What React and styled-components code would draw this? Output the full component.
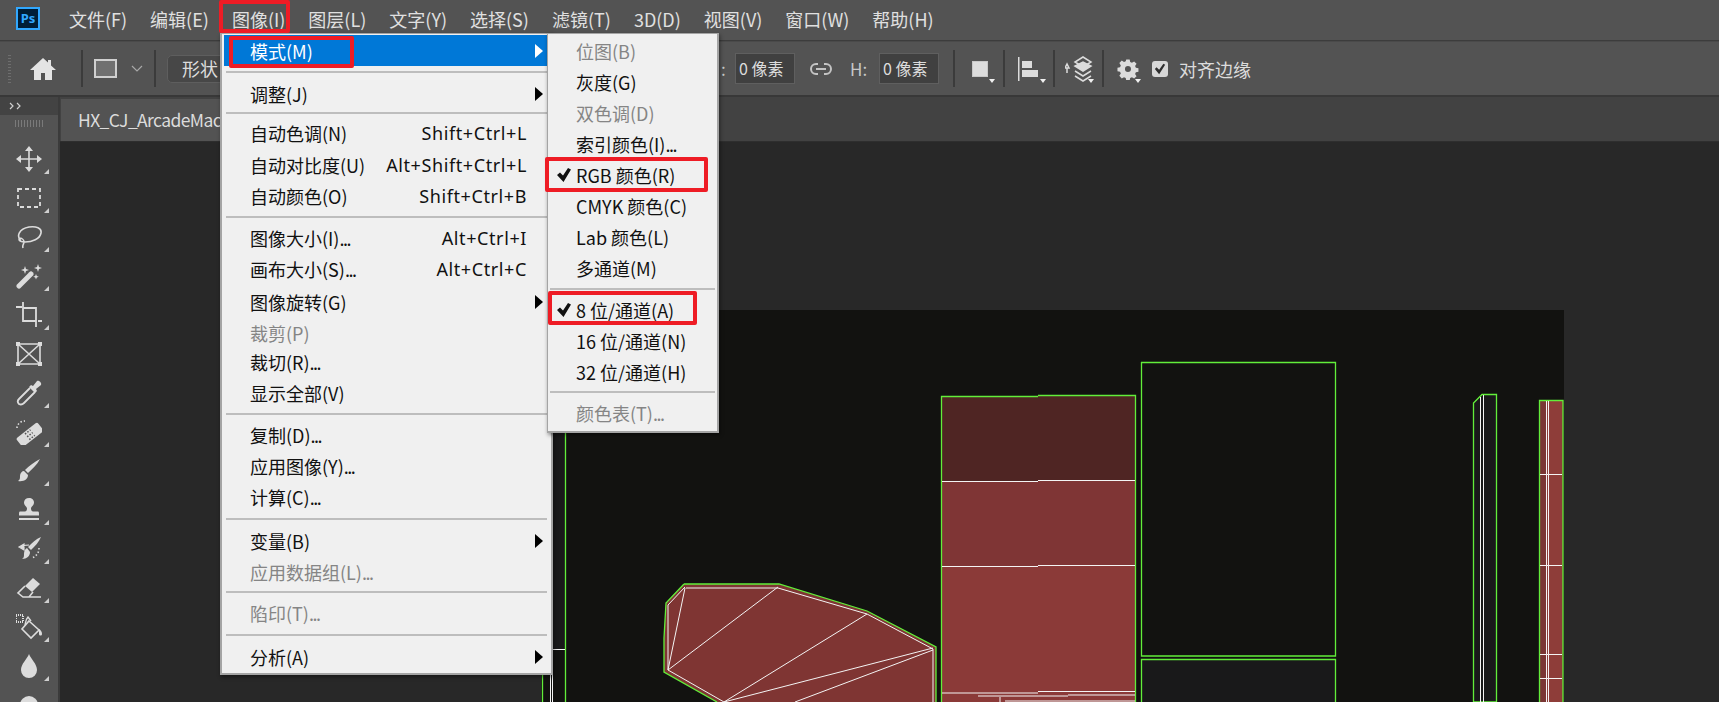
import React from 'react';
import styled, { createGlobalStyle } from 'styled-components';

const FONT = '"Noto Sans CJK SC", "Noto Sans", sans-serif';
const GREEN = '#62ee3a';
const WHITE = '#f4f4f4';

const GlobalStyle = createGlobalStyle`
    html, body {
        margin: 0;
        padding: 0;
        background: #282828;
        overflow: hidden;
    }
`;

const menuTitles = ['文件(F)', '编辑(E)', '图像(I)', '图层(L)', '文字(Y)', '选择(S)', '滤镜(T)', '3D(D)', '视图(V)', '窗口(W)', '帮助(H)'];

const mainMenu = [
    { label: '模式(M)', arrow: true, active: true },
    { sep: 12 },
    { label: '调整(J)', arrow: true },
    { sep: 8 },
    { label: '自动色调(N)', key: 'Shift+Ctrl+L', h: 32 },
    { label: '自动对比度(U)', key: 'Alt+Shift+Ctrl+L' },
    { label: '自动颜色(O)', key: 'Shift+Ctrl+B', h: 32 },
    { sep: 10 },
    { label: '图像大小(I)', dots: true, key: 'Alt+Ctrl+I', h: 31 },
    { label: '画布大小(S)', dots: true, key: 'Alt+Ctrl+C', h: 32 },
    { label: '图像旋转(G)', arrow: true, h: 34 },
    { label: '裁剪(P)', disabled: true, h: 27 },
    { label: '裁切(R)', dots: true },
    { label: '显示全部(V)' },
    { sep: 11 },
    { label: '复制(D)', dots: true },
    { label: '应用图像(Y)', dots: true },
    { label: '计算(C)', dots: true },
    { sep: 13 },
    { label: '变量(B)', arrow: true },
    { label: '应用数据组(L)', dots: true, disabled: true },
    { sep: 10 },
    { label: '陷印(T)', dots: true, disabled: true },
    { sep: 13 },
    { label: '分析(A)', arrow: true },
];

const subMenu = [
    { label: '位图(B)', disabled: true },
    { label: '灰度(G)' },
    { label: '双色调(D)', disabled: true },
    { label: '索引颜色(I)', dots: true },
    { label: 'RGB 颜色(R)', checked: true },
    { label: 'CMYK 颜色(C)' },
    { label: 'Lab 颜色(L)' },
    { label: '多通道(M)' },
    { sep: 11 },
    { label: '8 位/通道(A)', checked: true },
    { label: '16 位/通道(N)' },
    { label: '32 位/通道(H)' },
    { sep: 10 },
    { label: '颜色表(T)', dots: true, disabled: true },
];

const Icon = ({ size = 26, children }) => (
    <svg width={size} height={size} viewBox='0 0 26 26' fill='none' stroke='#dcdcdc' strokeWidth='1.6'>{children}</svg>
);

const toolIcons = [
    <Icon key='move'>
        <path d='M13 3v20M3 13h20' />
        <path d='M13 0l4 5H9zM13 26l4-5H9zM0 13l5-4v8zM26 13l-5-4v8z' fill='#dcdcdc' stroke='none' />
    </Icon>,
    <Icon key='marquee'>
        <rect x='2' y='4' width='22' height='18' strokeDasharray='4 3' strokeWidth='1.8' />
    </Icon>,
    <Icon key='lasso'>
        <path d='M5 17C0 12 3 5 13 3c7-1 13 1 12 6-1 6-9 9-16 9-3 0-6-1-6-3M3 14c3 0 5 2 5 4 0 2-2 3-1 6' />
    </Icon>,
    <Icon key='wand'>
        <path d='M3 23L15 11' strokeWidth='5' strokeLinecap='round' />
        <path d='M9 3l1 3 3 1-3 1-1 3-1-3-3-1 3-1zM22 1l1 3 3 1-3 1-1 3-1-3-3-1 3-1zM20 11l.8 2 2 .8-2 .8-.8 2-.8-2-2-.8 2-.8z' fill='#dcdcdc' stroke='none' />
    </Icon>,
    <Icon key='crop'>
        <path d='M0 5h6M7 0v19h13M7 6h13v19M22 19h4' strokeWidth='1.8' />
    </Icon>,
    <Icon key='frame'>
        <path d='M2 3h22v20H2zM2 3l22 20M24 3L2 23' />
        <path d='M0 1h4v4H0zM22 1h4v4h-4zM0 21h4v4H0zM22 21h4v4h-4z' fill='#dcdcdc' stroke='none' />
    </Icon>,
    <Icon key='eyedropper'>
        <path d='M14 8L3 19c-2 2-1 4 0 5 2 1 3 1 5-1l11-11' strokeWidth='1.8' />
        <path d='M13 7l2-2 2 1 4-5c2-1 5 2 4 4l-5 4 1 2-2 2z' fill='#dcdcdc' stroke='none' />
    </Icon>,
    <Icon key='healing'>
        <g transform='rotate(-38 14 15)'>
            <rect x='0' y='10' width='27' height='11' rx='2' fill='#dcdcdc' stroke='none' />
            <path d='M10 12h7M10 15.500h7M10 19h7' stroke='#535353' strokeDasharray='1.500 1.500' strokeWidth='1.500' />
        </g>
        <path d='M1 9c0-4 4-7 8-7' strokeDasharray='1.500 2' />
    </Icon>,
    <Icon key='brush'>
        <path d='M24 1c-3 6-8 10-12 14l-3-3C13 8 18 4 24 1zM8 13l4 4c0 4-4 7-10 6 2-1 2-3 2-5 0-3 2-5 4-5z' fill='#dcdcdc' stroke='none' />
    </Icon>,
    <Icon key='stamp'>
        <path d='M13 1c3 0 5 2 5 4.500 0 3-3 4-3 6 0 2 1 3 2 3h5c1 0 1 1 1 4H3c0-3 0-4 1-4h5c1 0 2-1 2-3 0-2-3-3-3-6C8 3 10 1 13 1z' fill='#dcdcdc' stroke='none' />
        <path d='M3 22h20' strokeWidth='2' />
    </Icon>,
    <Icon key='history'>
        <path d='M25 1c-2 5-6 9-10 13l-3-3c4-4 8-8 13-10zM11 12l3 4c0 4-3 7-8 7 2-1 2-3 2-5 0-3 1-5 3-6z' fill='#dcdcdc' stroke='none' />
        <path d='M3 11l5-3v6zM7 10c2-1 4-1 6-1' fill='#dcdcdc' strokeWidth='1.200' />
        <path d='M23 12c0 4-2 8-7 10' strokeDasharray='1.500 2' />
    </Icon>,
    <Icon key='eraser'>
        <path d='M17 3l7 6-8 8-7-6z' fill='#dcdcdc' stroke='none' />
        <path d='M9 11l-7 7 5 4h6l4-5M7 22h18' />
    </Icon>,
    <Icon key='bucket'>
        <path d='M13 7l10 9-8 8L6 15z' />
        <path d='M9 11c1-4 1-6 3-8l3 4' strokeWidth='1.400' />
        <path d='M23 15c2 1 3 3 3 5s-3 2-3 0 0-3 0-5z' fill='#dcdcdc' stroke='none' />
        <rect x='0' y='1' width='7' height='7' strokeDasharray='1 1' strokeWidth='2' />
    </Icon>,
    <Icon key='drop'>
        <path d='M13 1c2 5 8 10 8 16a8 8 0 0 1-16 0c0-6 6-11 8-16z' fill='#dcdcdc' stroke='none' />
    </Icon>,
    <Icon key='dodge'>
        <circle cx='13' cy='13' r='9' fill='#dcdcdc' stroke='none' />
    </Icon>,
];

const Doc = () => (
    <DocSvg viewBox='541 310 1023 392' width='1023' height='392'>
        {/* left piece, mostly under the menu */}
        <rect x='553' y='432' width='12' height='217' fill='#19191a' />
        <path d='M542.500 673V702M565.500 432V702' stroke={GREEN} strokeWidth='1.300' />
        <path d='M550.500 673V702M552.500 673V702M552 649.500H565' stroke={WHITE} strokeWidth='1' />

        {/* the fan shaped piece */}
        <path d='M684 584L779 584L867 611L936 647V702H717L664 672V638L666 603Z' fill='#7f3533' stroke='none' />
        <path d='M684 584L779 584L867 611L936 647V702M717 702L664 672V638L666 603L684 584' fill='none' stroke={GREEN} strokeWidth='1.300' />
        <path d='M686 588H778L867 614L933 649V702M668 670L668 605L685 587M668 670L685 588M668 670L778 587M668 670L724 702M724 702L867 614M724 702L933 648M795 702L933 650' fill='none' stroke={WHITE} strokeWidth='1' />

        {/* tall block */}
        <rect x='941' y='396' width='195' height='85' fill='#4f2523' />
        <rect x='941' y='481' width='195' height='85' fill='#7f3535' />
        <rect x='941' y='566' width='195' height='136' fill='#8b3a38' />
        <path d='M941.500 702V396.500H1038M1038 395.500H1135.500V702' fill='none' stroke={GREEN} strokeWidth='1.300' />
        <path d='M942 481.500H1038M1038 480.500H1135M942 566.500H1038M1038 565.500H1135' fill='none' stroke={WHITE} strokeWidth='1' />
        <path d='M942 693H1038M1038 691.500H1135M978 696H1068M1068 695H1135M1005 701H1135M1000 697V702' fill='none' stroke={WHITE} strokeWidth='1' />

        {/* empty blocks */}
        <path d='M1141 362.500H1335.500V656H1141.500V362' fill='none' stroke={GREEN} strokeWidth='1.300' />
        <rect x='1141' y='659' width='195' height='43' fill='#19191a' />
        <path d='M1141.500 702V659.500H1335.500V702' fill='none' stroke={GREEN} strokeWidth='1.300' />

        {/* thin strip */}
        <path d='M1473.500 702V403L1482 394.500H1496.500V702Z' fill='#19191a' stroke={GREEN} strokeWidth='1.300' />
        <path d='M1480.500 397V702M1483.500 395V702' stroke={WHITE} strokeWidth='1' />

        {/* right strip */}
        <rect x='1539' y='400' width='7' height='302' fill='#7a3634' />
        <rect x='1546' y='400' width='17' height='302' fill='#8e3d39' />
        <path d='M1539.500 702V400.500H1563V702' fill='none' stroke={GREEN} strokeWidth='1.300' />
        <path d='M1546.500 401V702M1548.500 401V702M1540 474.500H1562M1540 565.500H1562M1540 654.500H1562M1540 678.500H1562' stroke={WHITE} strokeWidth='1' />
    </DocSvg>
);

const MenuItems = ({ items }) => items.map((item, idx) => {
    if (item.sep) return <Separator key={idx} $h={item.sep} />;
    return (
        <Row key={idx} $h={item.h} $active={item.active} $disabled={item.disabled}>
            {item.checked && <Check viewBox='0 0 14 14'><path d='M0 7l3-2.500 3 3L11 0l3 1.500L6.500 14z' /></Check>}
            <span>{item.label}{item.dots && <Dots>...</Dots>}</span>
            {item.key && <Shortcut>{item.key}</Shortcut>}
            {item.arrow && <Arrow $active={item.active} />}
        </Row>
    );
});

const App = () => {
    return (
        <Page>
            <GlobalStyle />
            <MenuBar>
                <PsLogo>Ps</PsLogo>
                <MenuTitles>
                    {menuTitles.map((t, idx) => <MenuTitle key={idx}>{t}</MenuTitle>)}
                </MenuTitles>
            </MenuBar>

            <OptionsBar>
                <Gripper />
                <HomeIcon viewBox='0 0 26 24'><path d='M13 1L0 13h4v10h7v-7h4v7h7V13h4l-5-4.600V3h-3v2.600z' /></HomeIcon>
                <ToolSep $ml={25} />
                <ShapeSwatch />
                <Chevron viewBox='0 0 12 8'><path d='M1 1l5 5 5-5' /></Chevron>
                <ToolSep $ml={11} />
                <ModePill>形状</ModePill>
                <Colon>:</Colon>
                <SizeInput>0 像素</SizeInput>
                <LinkIcon viewBox='0 0 24 14'>
                    <path d='M9 2H7a5 5 0 0 0 0 10h2M15 2h2a5 5 0 0 1 0 10h-2M7 7h10' />
                </LinkIcon>
                <OptionLabel>H:</OptionLabel>
                <SizeInput $ml={11}>0 像素</SizeInput>
                <ToolSep $ml={14} />
                <DropButton $ml={17} $w={23}>
                    <FillSwatch />
                </DropButton>
                <ToolSep $ml={8} />
                <DropButton $ml={12} $w={29}>
                    <svg width='22' height='26' viewBox='0 0 22 26' fill='#dcdcdc'>
                        <path d='M1 1h1.500v24H1zM5 5h10v7H5zM5 14h16v7H5z' />
                    </svg>
                </DropButton>
                <ToolSep $ml={7} />
                <DropButton $ml={10} $w={29}>
                    <svg width='28' height='26' viewBox='0 0 28 26' fill='none' stroke='#dcdcdc' strokeWidth='1.500'>
                        <path d='M0 12h4M2 8l-2 4h4zM2 12v5' />
                        <path d='M18 1l8 5-8 5-8-5z' />
                        <path d='M10 10l8 5 8-5-8-4z' fill='#dcdcdc' />
                        <path d='M10 15l8 5 8-5M10 20l8 5 8-5' />
                    </svg>
                </DropButton>
                <ToolSep $ml={8} />
                <DropButton $ml={13} $w={24}>
                    <svg width='22' height='22' viewBox='0 0 22 22' fill='#dcdcdc' fillRule='evenodd'>
                        <path d='M9 0h4l.6 3 2 .9 2.600-1.700 2.800 2.800-1.700 2.600.9 2 3 .6v4l-3 .6-.9 2 1.700 2.600-2.800 2.800-2.600-1.700-2 .9-.6 3H9l-.6-3-2-.9-2.600 1.700L1 18.800l1.700-2.600-.9-2-3-.6v-4l3-.6.9-2L1 4l2.800-2.800 2.600 1.700 2-.9zM11 7.500a3.500 3.500 0 1 0 0 7 3.500 3.500 0 0 0 0-7z' transform='translate(1.500 1.500) scale(.86)' />
                    </svg>
                </DropButton>
                <CheckBox>
                    <svg width='12' height='12' viewBox='0 0 14 14' fill='#2f2f2f'><path d='M1 7l2-2 3 3 5-7 2 1-7 11z' /></svg>
                </CheckBox>
                <CheckLabel>对齐边缘</CheckLabel>
            </OptionsBar>

            <Workspace>
                <Toolbar>
                    <CollapseStrip>
                        <svg width='14' height='8' viewBox='0 0 14 8' fill='none' stroke='#cfcfcf' strokeWidth='1.200'>
                            <path d='M1 1l3 3-3 3M8 1l3 3-3 3' />
                        </svg>
                    </CollapseStrip>
                    <ToolGrip />
                    <ToolList>
                        {toolIcons.map((icon, idx) => <Tool key={idx} $corner={idx !== 5}>{icon}</Tool>)}
                    </ToolList>
                </Toolbar>
                <Main>
                    <TabRow>
                        <DocTab>HX_CJ_ArcadeMachine</DocTab>
                    </TabRow>
                    <Canvas>
                        <Doc />
                    </Canvas>
                </Main>
            </Workspace>

            <Menu>
                <MenuItems items={mainMenu} />
            </Menu>
            <SubMenu>
                <MenuItems items={subMenu} />
            </SubMenu>

            <RedBox $x={219} $y={0} $w={71} $h={33} />
            <RedBox $x={229} $y={36} $w={125} $h={32} />
            <RedBox $x={545} $y={157} $w={163} $h={35} />
            <RedBox $x={548} $y={291} $w={149} $h={34} />
        </Page>
    );
};

const Page = styled.div`
    position: relative;
    width: 1719px;
    height: 702px;
    overflow: hidden;
    display: flex;
    flex-direction: column;
    background: #282828;
    font-family: ${FONT};
`;

const MenuBar = styled.div`
    box-sizing: border-box;
    height: 41px;
    flex: none;
    display: flex;
    align-items: center;
    padding-bottom: 3px;
    background: #535353;
    border-bottom: 1px solid #3c3c3c;
`;

const PsLogo = styled.div`
    box-sizing: border-box;
    width: 24px;
    height: 23px;
    margin-left: 16px;
    border: 2px solid #31a8ff;
    background: #001e36;
    color: #31a8ff;
    font: bold 13px/19px "Noto Sans", sans-serif;
    text-align: center;
`;

const MenuTitles = styled.div`
    display: flex;
    gap: 23px;
    margin-left: 29px;
`;

const MenuTitle = styled.div`
    color: #e0e0e0;
    font-size: 18px;
    line-height: 26px;
    white-space: nowrap;
`;

const OptionsBar = styled.div`
    height: 53px;
    flex: none;
    display: flex;
    align-items: center;
    padding-left: 8px;
    background: #535353;
    border-top: 1px solid #4a4a4a;
    border-bottom: 2px solid #383838;
`;

const Gripper = styled.div`
    width: 3px;
    height: 28px;
    background: repeating-linear-gradient(to bottom, #6e6e6e 0 1px, transparent 1px 3px);
`;

const HomeIcon = styled.svg`
    width: 26px;
    height: 24px;
    margin-left: 19px;
    fill: #e4e4e4;
`;

const ToolSep = styled.div`
    width: 2px;
    height: 37px;
    flex: none;
    margin-left: ${p => p.$ml}px;
    background: #3b3b3b;
`;

const ShapeSwatch = styled.div`
    box-sizing: border-box;
    width: 23px;
    height: 19px;
    margin-left: 11px;
    background: #707070;
    border: 2px solid #d0d0d0;
`;

const Chevron = styled.svg`
    width: 12px;
    height: 8px;
    margin-left: 14px;
    fill: none;
    stroke: #a8a8a8;
    stroke-width: 1.2;
`;

const ModePill = styled.div`
    box-sizing: border-box;
    width: 94px;
    height: 28px;
    margin-left: 11px;
    padding-left: 14px;
    background: #474747;
    border: 1px solid #5e5e5e;
    border-radius: 5px;
    color: #dcdcdc;
    font-size: 18px;
    line-height: 25px;
`;

const Colon = styled.div`
    width: 4px;
    margin-left: 460px;
    color: #c8c8c8;
    font-size: 17px;
`;

const SizeInput = styled.div`
    box-sizing: border-box;
    width: 60px;
    height: 31px;
    flex: none;
    margin-left: ${p => p.$ml || 10}px;
    padding-left: 3px;
    background: #404040;
    border: 1px solid #5f5f5f;
    color: #dcdcdc;
    font-size: 16px;
    line-height: 29px;
    white-space: nowrap;
`;

const LinkIcon = styled.svg`
    width: 24px;
    height: 14px;
    margin-left: 14px;
    fill: none;
    stroke: #c4c4c4;
    stroke-width: 2;
`;

const OptionLabel = styled.div`
    width: 18px;
    margin-left: 17px;
    color: #c8c8c8;
    font-size: 17px;
`;

const DropButton = styled.div`
    position: relative;
    width: ${p => p.$w}px;
    height: 30px;
    flex: none;
    display: flex;
    align-items: center;
    margin-left: ${p => p.$ml}px;
    &::after {
        content: '';
        position: absolute;
        right: 0;
        bottom: 1px;
        border-left: 3px solid transparent;
        border-right: 3px solid transparent;
        border-top: 4px solid #f0f0f0;
    }
`;

const FillSwatch = styled.div`
    width: 16px;
    height: 16px;
    background: #dcdcdc;
    border: 1px solid #c8c8c8;
    box-sizing: border-box;
`;

const CheckBox = styled.div`
    width: 16px;
    height: 16px;
    flex: none;
    display: flex;
    align-items: center;
    justify-content: center;
    margin-left: 11px;
    background: #d8d8d8;
    border-radius: 3px;
`;

const CheckLabel = styled.div`
    margin-left: 11px;
    color: #dcdcdc;
    font-size: 18px;
`;

const Workspace = styled.div`
    flex: 1;
    min-height: 0;
    display: flex;
`;

const Toolbar = styled.div`
    width: 58px;
    flex: none;
    background: #535353;
    border-right: 2px solid #3b3b3b;
`;

const CollapseStrip = styled.div`
    height: 18px;
    display: flex;
    align-items: center;
    padding-left: 9px;
    background: #434343;
`;

const ToolGrip = styled.div`
    width: 28px;
    height: 7px;
    margin: 5px 0 0 15px;
    background: repeating-linear-gradient(to right, #7a7a7a 0 1px, transparent 1px 3px);
`;

const ToolList = styled.div`
    display: flex;
    flex-direction: column;
    padding-top: 12px;
`;

const Tool = styled.div`
    position: relative;
    height: 39px;
    flex: none;
    display: flex;
    align-items: center;
    justify-content: center;
    &::after {
        content: '';
        display: ${p => (p.$corner ? 'block' : 'none')};
        position: absolute;
        right: 9px;
        bottom: 4px;
        border-left: 5px solid transparent;
        border-bottom: 5px solid #cfcfcf;
    }
`;

const Main = styled.div`
    flex: 1;
    min-width: 0;
    display: flex;
    flex-direction: column;
`;

const TabRow = styled.div`
    height: 44px;
    flex: none;
    display: flex;
    align-items: flex-end;
    background: #424242;
    border-bottom: 1px solid #2e2e2e;
`;

const DocTab = styled.div`
    box-sizing: border-box;
    height: 42px;
    margin-left: 1px;
    padding: 0 60px 0 17px;
    background: #535353;
    color: #dcdcdc;
    font-size: 17.5px;
    letter-spacing: -0.6px;
    line-height: 42px;
`;

const Canvas = styled.div`
    flex: 1;
    min-height: 0;
    overflow: hidden;
    padding: 168px 0 0 481px;
    background: #282828;
`;

const DocSvg = styled.svg`
    display: block;
    background: #121210;
`;

const Menu = styled.div`
    position: absolute;
    left: 220px;
    top: 33px;
    box-sizing: border-box;
    width: 333px;
    height: 642px;
    padding: 1px 2px;
    background: #f0f0f0;
    border: 2px solid #a4a4a4;
    border-top-width: 1px;
    box-shadow: 1px 2px 4px rgba(0, 0, 0, 0.45);
`;

const SubMenu = styled(Menu)`
    left: 547px;
    width: 172px;
    height: 400px;
    border-width: 1px 2px 2px 1px;
    padding: 1px 0;
`;

const Row = styled.div`
    position: relative;
    height: ${p => p.$h || 31}px;
    display: flex;
    align-items: center;
    padding: 0 22px 0 26px;
    background: ${p => (p.$active ? '#0078d7' : 'transparent')};
    color: ${p => (p.$active ? '#ffffff' : p.$disabled ? '#858585' : '#111111')};
    font-size: 18px;
    white-space: nowrap;
    ${SubMenu} & {
        padding: 0 0 0 28px;
    }
`;

const Dots = styled.span`
    letter-spacing: -1.5px;
`;

const Shortcut = styled.span`
    margin-left: auto;
    font-family: "Noto Sans", sans-serif;
    font-size: 18px;
    letter-spacing: 0.6px;
`;

const Arrow = styled.span`
    margin: 0 -16px 0 auto;
    border-top: 7px solid transparent;
    border-bottom: 7px solid transparent;
    border-left: 8px solid ${p => (p.$active ? '#ffffff' : '#000000')};
`;

const Check = styled.svg`
    position: absolute;
    left: 9px;
    top: 9px;
    width: 14px;
    height: 14px;
    fill: #111111;
`;

const Separator = styled.div`
    height: ${p => p.$h}px;
    display: flex;
    align-items: center;
    &::before {
        content: '';
        flex: 1;
        height: 2px;
        margin: 0 2px;
        background: #bdbdbd;
    }
`;

const RedBox = styled.div`
    position: absolute;
    left: ${p => p.$x}px;
    top: ${p => p.$y}px;
    box-sizing: border-box;
    width: ${p => p.$w}px;
    height: ${p => p.$h}px;
    border: 4px solid #ee1c25;
    border-radius: 2px;
`;

export default App;
